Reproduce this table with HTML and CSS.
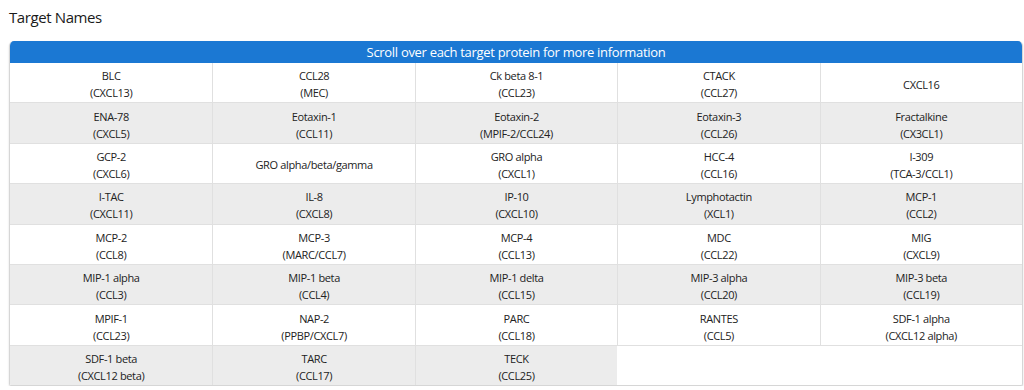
FILE: index.html
```html
<!DOCTYPE html>
<html lang="en">
<head>
  <meta charset="UTF-8" />
  <title>Target Names</title>
  <link rel="stylesheet" href="styles.css">
</head>
<body>
  <h2 class="title">Target Names</h2>

  <div class="targets">
    <div class="targets-head">Scroll over each target protein for more information</div>

    <div class="row">
      <div class="cell">BLC<br />(CXCL13)</div>
      <div class="cell">CCL28<br />(MEC)</div>
      <div class="cell">Ck beta 8-1<br />(CCL23)</div>
      <div class="cell">CTACK<br />(CCL27)</div>
      <div class="cell">CXCL16</div>
    </div>
    <div class="row">
      <div class="cell">ENA-78<br />(CXCL5)</div>
      <div class="cell">Eotaxin-1<br />(CCL11)</div>
      <div class="cell">Eotaxin-2<br />(MPIF-2/CCL24)</div>
      <div class="cell">Eotaxin-3<br />(CCL26)</div>
      <div class="cell">Fractalkine<br />(CX3CL1)</div>
    </div>
    <div class="row">
      <div class="cell">GCP-2<br />(CXCL6)</div>
      <div class="cell">GRO alpha/beta/gamma</div>
      <div class="cell">GRO alpha<br />(CXCL1)</div>
      <div class="cell">HCC-4<br />(CCL16)</div>
      <div class="cell">I-309<br />(TCA-3/CCL1)</div>
    </div>
    <div class="row">
      <div class="cell">I-TAC<br />(CXCL11)</div>
      <div class="cell">IL-8<br />(CXCL8)</div>
      <div class="cell">IP-10<br />(CXCL10)</div>
      <div class="cell">Lymphotactin<br />(XCL1)</div>
      <div class="cell">MCP-1<br />(CCL2)</div>
    </div>
    <div class="row">
      <div class="cell">MCP-2<br />(CCL8)</div>
      <div class="cell">MCP-3<br />(MARC/CCL7)</div>
      <div class="cell">MCP-4<br />(CCL13)</div>
      <div class="cell">MDC<br />(CCL22)</div>
      <div class="cell">MIG<br />(CXCL9)</div>
    </div>
    <div class="row">
      <div class="cell">MIP-1 alpha<br />(CCL3)</div>
      <div class="cell">MIP-1 beta<br />(CCL4)</div>
      <div class="cell">MIP-1 delta<br />(CCL15)</div>
      <div class="cell">MIP-3 alpha<br />(CCL20)</div>
      <div class="cell">MIP-3 beta<br />(CCL19)</div>
    </div>
    <div class="row">
      <div class="cell">MPIF-1<br />(CCL23)</div>
      <div class="cell">NAP-2<br />(PPBP/CXCL7)</div>
      <div class="cell">PARC<br />(CCL18)</div>
      <div class="cell">RANTES<br />(CCL5)</div>
      <div class="cell">SDF-1 alpha<br />(CXCL12 alpha)</div>
    </div>
    <div class="row last">
      <div class="cell">SDF-1 beta<br />(CXCL12 beta)</div>
      <div class="cell">TARC<br />(CCL17)</div>
      <div class="cell">TECK<br />(CCL25)</div>
    </div>
  </div>
</body>
</html>
```

FILE: styles.css
```css
body {
  margin: 0;
  padding: 0 1px 0 9px;
  font-family: "Open Sans", Arial, sans-serif;
  color: #222;
  background: #fff;
}

.title {
  margin: 0;
  padding-top: 7px;
  height: 41px;
  box-sizing: border-box;
  font-size: 15px;
  letter-spacing: -0.4px;
  font-weight: 400;
  color: #1a1a1a;
}

.targets {
  border: 1px solid #d6d6d6;
  border-top: none;
  border-radius: 5px 5px 2px 2px;
  box-shadow: 0 1px 2px rgba(0 0 0 / 0.15);
  overflow: hidden;
}

.targets-head {
  background-color: #1b78d3;
  color: white;
  text-align: center;
  font-size: 13px;
  letter-spacing: -0.3px;
  line-height: 22px;
  height: 22px;
}

.row {
  display: grid;
  grid-template-columns: repeat(5, 1fr);
  border-bottom: 1px solid #e0e0e0;
}

.row:nth-child(odd) .cell {
  background-color: #ececec;
}

.row.last {
  border-bottom: none;
}

.cell {
  display: flex;
  align-items: center;
  justify-content: center;
  text-align: center;
  font-size: 11px;
  letter-spacing: -0.35px;
  line-height: 17px;
  min-height: 39.4px;
  padding: 3px 4px 0;
  box-sizing: border-box;
  border-left: 1px solid #e0e0e0;
}

.cell:first-child {
  border-left: none;
}
```
